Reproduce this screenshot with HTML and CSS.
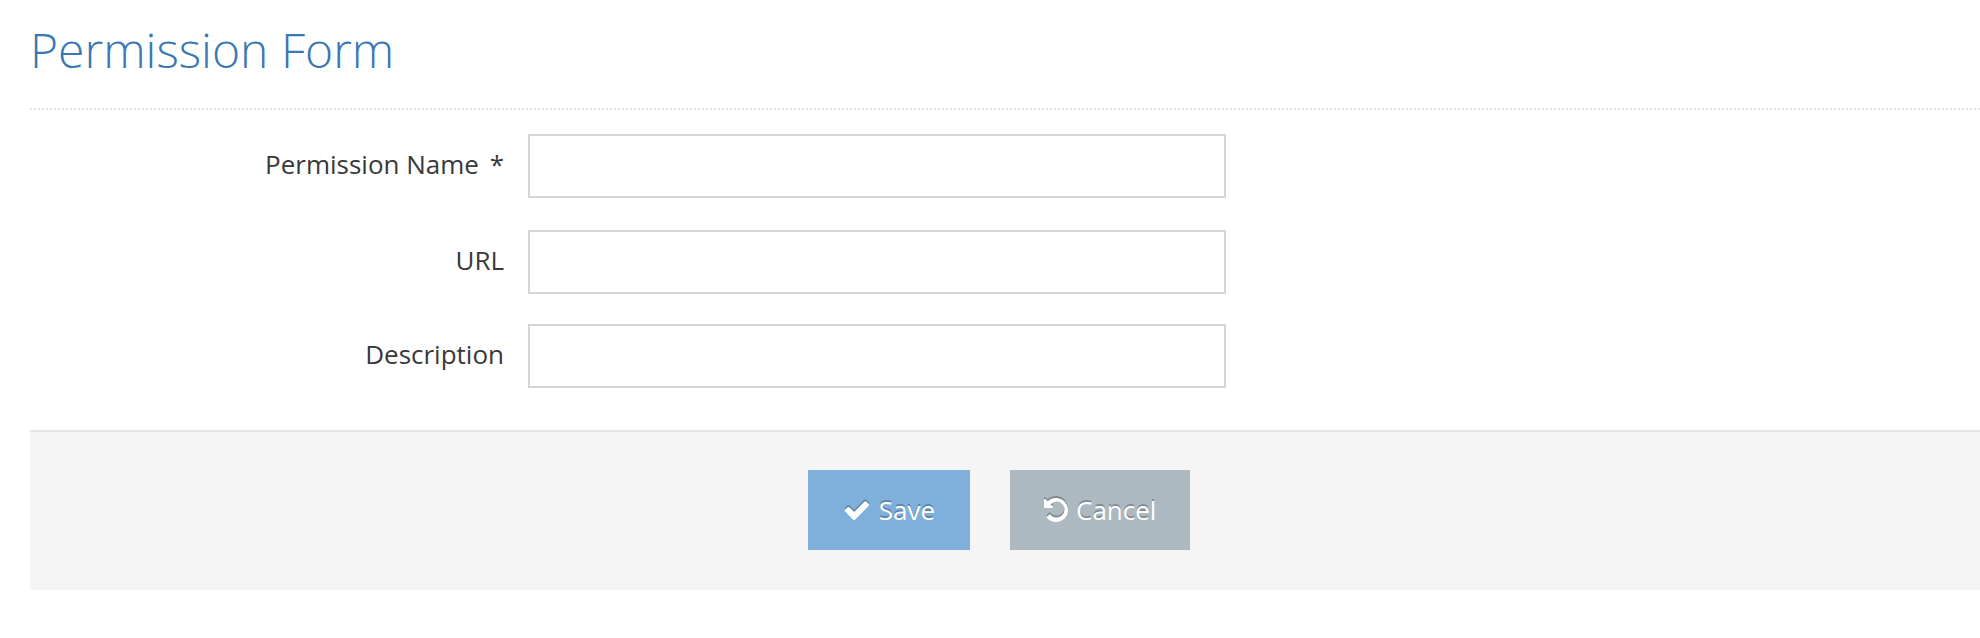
FILE: index.html
```html
<!DOCTYPE html>
<html lang="en">
<head>
<meta charset="utf-8">
<title>Permission Form</title>
<link rel="stylesheet" href="styles.css">
</head>
<body>
<main class="page">
  <header class="page-header">
    <h1 class="page-title">Permission Form</h1>
  </header>
  <form class="form">
    <div class="form-row form-row-required">
      <label class="form-label" for="permission-name">Permission Name <span class="required-mark">*</span></label>
      <input class="form-input" id="permission-name" type="text">
    </div>
    <div class="form-row">
      <label class="form-label" for="url">URL</label>
      <input class="form-input" id="url" type="text">
    </div>
    <div class="form-row">
      <label class="form-label" for="description">Description</label>
      <input class="form-input" id="description" type="text">
    </div>
    <div class="form-actions">
      <div class="button-group">
        <button class="button button-save" type="button">
          <svg class="icon" viewBox="0 0 28 28" aria-hidden="true"><path d="M26.1 8.9c0 .4-.2.8-.5 1.1L12.2 23.4c-.3.3-.7.5-1.1.5s-.8-.2-1.1-.5L2.3 15.7c-.3-.3-.5-.7-.5-1.1s.2-.8.5-1.1l2.1-2.1c.3-.3.7-.5 1.1-.5s.8.2 1.1.5l4.6 4.6L21.300 5.800c.3-.3.7-.5 1.100-.5s.8.2 1.100.5l2.100 2.100c.3.3.5.6.5 1z"/></svg>
          <span>Save</span>
        </button>
        <button class="button button-cancel" type="button">
          <svg class="icon" viewBox="0 0 28 28" aria-hidden="true"><path d="M26 14c0 6.6-5.4 12-12 12-3.6 0-7-1.6-9.2-4.3-.2-.2-.1-.5 0-.7l2.600-2.600c.1-.1.3-.2.4-.2.200 0 .3.1.4.2A8 8 0 1 0 8.600 8.200l2.100 2.100c.3.3.4.7.2 1.100-.1.4-.5.6-.9.6H3c-.5 0-1-.4-1-1V4c0-.4.2-.8.6-.9.4-.2.8-.1 1.100.2l2 2C7.900 3.200 10.900 2 14 2c6.600 0 12 5.400 12 12z"/></svg>
          <span>Cancel</span>
        </button>
      </div>
    </div>
  </form>
</main>
</body>
</html>
```
FILE: styles.css
```css
* {
  box-sizing: border-box;
}

body {
  margin: 0;
  background: #fff;
  color: #393939;
  font-family: "Open Sans", "Noto Sans", sans-serif;
  font-size: 26px;
}

.page {
  padding: 16px 0 40px 30px;
}

.page-header {
  padding-bottom: 26px;
  background: repeating-linear-gradient(90deg, #e2e2e2 0 2px, transparent 2px 4px) left bottom / 100% 2px no-repeat;
}

.page-title {
  margin: 0;
  color: #3b78b2;
  font-size: 48px;
  font-weight: 300;
  line-height: 68px;
}

.form {
  padding-top: 24px;
}

.form-row {
  display: grid;
  grid-template-columns: 474fr 698fr 730fr;
  column-gap: 24px;
  margin-bottom: 30px;
}

.form-row-required {
  margin-bottom: 32px;
}

.form-label {
  line-height: 60px;
  text-align: right;
}

.required-mark {
  margin-left: 4px;
}

.form-input {
  width: 100%;
  height: 64px;
  padding: 8px 12px;
  border: 2px solid #d5d5d5;
  border-radius: 0;
  background: #fff;
  color: #393939;
  font: inherit;
}

.form-actions {
  display: grid;
  grid-template-columns: 778fr 1172fr;
  margin-top: 42px;
  padding: 38px 0 40px;
  border-top: 2px solid #e5e5e5;
  background: #f5f5f5;
}

.button-group {
  display: flex;
  grid-column: 2;
  gap: 40px;
}

.button {
  display: flex;
  align-items: center;
  justify-content: center;
  height: 80px;
  border: 0;
  color: #fff;
  font: inherit;
  text-shadow: 0 -2px 0 rgba(0, 0, 0, 0.25);
}

.button-save {
  gap: 8px;
  min-width: 162px;
  padding: 0 34px;
  background: #7fb0dc;
}

.button-cancel {
  gap: 6px;
  min-width: 180px;
  padding: 0 34px 0 32px;
  background: #adb9c1;
}

.icon {
  width: 28px;
  height: 28px;
  fill: currentColor;
  filter: drop-shadow(0 -2px 0 rgba(0, 0, 0, 0.25));
}
```
